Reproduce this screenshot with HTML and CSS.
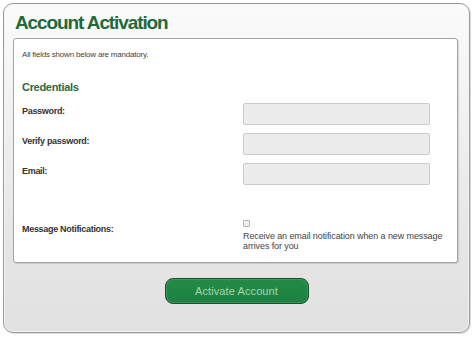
FILE: index.html
```html
<!DOCTYPE html>
<html>
<head>
<meta charset="utf-8">
<link rel="stylesheet" href="styles.css">
</head>
<body>
<div class="panel">
  <h1 class="title">Account Activation</h1>
  <div class="box">
    <p class="intro">All fields shown below are mandatory.</p>
    <h2 class="section">Credentials</h2>
    <div class="form">
      <label class="label">Password:</label>
      <div class="field"><input class="input" type="password"></div>
      <label class="label">Verify password:</label>
      <div class="field"><input class="input" type="password"></div>
      <label class="label">Email:</label>
      <div class="field"><input class="input" type="text"></div>
      <label class="label label-notify">Message Notifications:</label>
      <div class="field field-notify">
        <input class="check" type="checkbox">
        <div class="check-text">Receive an email notification when a new message arrives for you</div>
      </div>
    </div>
  </div>
  <div class="actions">
    <button class="button">Activate Account</button>
  </div>
</div>
</body>
</html>
```
FILE: styles.css
```css
html, body {
  margin: 0;
  padding: 0;
  background: #ffffff;
}
body {
  padding: 3px 4px 4px 3px;
  font-family: "Liberation Sans", Arial, sans-serif;
}
.panel {
  box-sizing: border-box;
  width: 467px;
  height: 330px;
  border: 1px solid #9a9a9a;
  border-radius: 10px;
  background: linear-gradient(to bottom, #fbfbfb 0%, #f2f2f2 30%, #e6e6e6 70%, #e1e1e1 100%);
  box-shadow: inset 0 0 0 1px #f4f4f4, 1px 1px 1px rgba(0,0,0,0.15);
  padding: 8px 12px 0 9px;
}
.title {
  margin: 0 0 4px 2px;
  font-size: 19px;
  line-height: 22px;
  letter-spacing: -1.1px;
  font-weight: bold;
  color: #1f6a39;
}
.box {
  box-sizing: border-box;
  width: 445px;
  height: 225px;
  background: #ffffff;
  border: 1px solid #a3a3a3;
  border-radius: 3px;
  box-shadow: 1px 1px 1px rgba(0,0,0,0.12);
  padding: 11px 8px 0 8px;
}
.intro {
  margin: 0;
  font-size: 8px;
  line-height: 10px;
  letter-spacing: -0.2px;
  color: #444;
}
.section {
  margin: 21px 0 0 0;
  font-size: 11px;
  line-height: 13px;
  letter-spacing: -0.3px;
  font-weight: bold;
  color: #2a6b40;
}
.form {
  margin-top: 9px;
  display: grid;
  grid-template-columns: 221px 187px;
  row-gap: 8px;
}
.label {
  padding-top: 3px;
  font-size: 9px;
  line-height: 11px;
  letter-spacing: -0.3px;
  font-weight: bold;
  color: #333;
}
.label-notify {
  margin-top: 27px;
  padding-top: 4px;
}
.field {
  display: flex;
  flex-direction: column;
}
.field-notify {
  margin-top: 27px;
}
.input {
  box-sizing: border-box;
  width: 187px;
  height: 22px;
  margin: 0;
  background: #ececec;
  border: 1px solid #cacaca;
  border-radius: 2px;
}
.check {
  appearance: none;
  -webkit-appearance: none;
  box-sizing: border-box;
  width: 7px;
  height: 7px;
  margin: 0;
  border: 1px solid #b5b5b5;
  border-radius: 1px;
  background: #eeeeee;
}
.check-text {
  margin-top: 4px;
  width: 210px;
  font-size: 9px;
  line-height: 10px;
  letter-spacing: -0.1px;
  color: #444;
}
.actions {
  display: flex;
  justify-content: center;
  margin-top: 15px;
  padding-left: 3px;
}
.button {
  box-sizing: border-box;
  width: 144px;
  height: 26px;
  border: 1px solid #1b4f2d;
  border-radius: 8px;
  background: linear-gradient(to bottom, #228a47 0%, #1d8241 100%);
  box-shadow: inset 0 0 0 1px rgba(255,255,255,0.12);
  color: #a3d5ad;
  font-family: "Liberation Sans", Arial, sans-serif;
  font-size: 11px;
  letter-spacing: 0.1px;
  padding: 0;
}
```
